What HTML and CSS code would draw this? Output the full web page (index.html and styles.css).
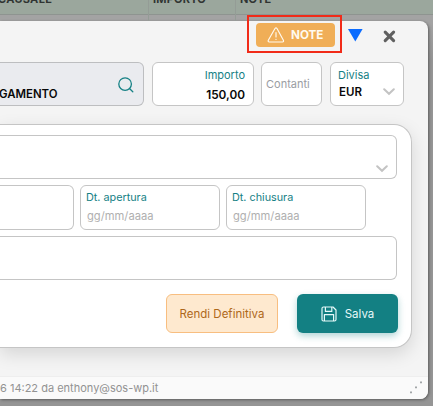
FILE: index.html
```
<!DOCTYPE html>
<html lang="it">
<head>
<meta charset="utf-8">
<title>Note</title>
<link rel="stylesheet" href="styles.css">
</head>
<body>
<div class="page">
  <div class="table-head">
    <span class="th th-causale"><span>CAUSALE</span></span>
    <span class="th th-importo"><span>IMPORTO</span></span>
    <span class="th th-note"><span>NOTE</span></span>
  </div>
  <main class="dialog">
    <header class="toolbar">
      <div class="highlight">
        <button class="note-btn">
          <svg width="18" height="16" viewBox="0 0 18 16" fill="none" stroke="currentColor" stroke-width="1.15" stroke-linejoin="round" stroke-linecap="round"><path d="M8 1.5 1.3 13.2Q.7 15 2.3 15H15.5Q17 15 16.4 13.2L10 1.5Q9 .3 8 1.5Z"/><path d="M9 5.5V10M9 12.3V12.5"/></svg>
          <span>NOTE</span>
        </button>
      </div>
      <svg class="triangle" width="15" height="13" viewBox="0 0 15 13"><path d="M0 0H14.6L7.3 12.4Z" fill="#0b6cff"/></svg>
      <svg class="close" width="13" height="13" viewBox="0 0 13 13"><path d="M2.2 2.2 10.6 10.6M10.6 2.2 2.2 10.6" stroke="#606060" stroke-width="3.1" stroke-linecap="round"/></svg>
    </header>
    <section class="fields">
      <div class="field causale"><b>GAMENTO</b>
        <svg width="16" height="16" viewBox="0 0 16 16" fill="none" stroke="#168185" stroke-width="1.3" stroke-linecap="round"><circle cx="7.1" cy="7.1" r="6.3"/><path d="m11.7 11.7 3.1 3.1"/></svg>
      </div>
      <div class="field importo"><label>Importo</label><b>150,00</b></div>
      <div class="field contanti">Contanti</div>
      <div class="field divisa"><label>Divisa</label><b>EUR</b>
        <svg class="chevron" width="12" height="8" viewBox="0 0 12 8"><path d="m1.2 1.2 4.8 4.6 4.8-4.6"/></svg>
      </div>
    </section>
    <section class="panel">
      <div class="field select"><svg class="chevron" width="12" height="8" viewBox="0 0 12 8"><path d="m1.2 1.2 4.8 4.6 4.8-4.6"/></svg></div>
      <div class="dates">
        <div class="field blank"></div>
        <div class="field date"><label>Dt. apertura</label><span>gg/mm/aaaa</span></div>
        <div class="field date"><label>Dt. chiusura</label><span>gg/mm/aaaa</span></div>
      </div>
      <div class="field wide"></div>
      <div class="actions">
        <button class="btn final">Rendi Definitiva</button>
        <button class="btn save">
          <svg width="16" height="16" viewBox="0 0 16 16" fill="none" stroke="currentColor" stroke-width="1.2" stroke-linejoin="round"><path d="M2.5 1H12L15 4V13.5Q15 15 13.5 15H2.5Q1 15 1 13.5V2.5Q1 1 2.5 1Z"/><path d="M4.4 1V5.4H10.8V1M3.4 15V8.6H12.6V15"/></svg>
          <span>Salva</span>
        </button>
      </div>
    </section>
    <footer class="status">
      <span>6 14:22 da enthony@sos-wp.it</span>
      <svg width="13" height="13" viewBox="0 0 13 13" fill="#a2a6a8"><path d="M0 10.5h2v1.7H0zM5 5.5h2v1.7H5zM10 .5h2v1.7h-2z"/></svg>
    </footer>
  </main>
</div>
</body>
</html>
```
FILE: styles.css
```
* { box-sizing: border-box; }

body { margin: 0; }

.page {
  width: 433px;
  height: 406px;
  overflow: hidden;
  background: linear-gradient(#a3a3a3 0 23px, #959595 60px);
  font: 12px/14px Inter, "Liberation Sans", sans-serif;
  color: #080808;
}

button { font: inherit; border: 0; padding: 0; }

.table-head {
  display: flex;
  height: 21px;
  background: linear-gradient(#9ba79d 0 14px, #8e9490 14px 15px, #a3a3a3 15px);
}

.th {
  height: 21px;
  color: #303432;
  font-size: 11px;
  font-weight: 700;
  border-right: 1px solid #949c96;
}

.th span { display: block; margin-top: -8px; letter-spacing: .2px; white-space: nowrap; }
.th-causale { width: 149px; }
.th-causale span { margin-left: -2px; letter-spacing: .3px; }
.th-importo { width: 87px; padding-left: 4px; }
.th-note { width: 197px; padding-left: 4px; border: 0; }

.dialog {
  display: flex;
  flex-direction: column;
  width: 428px;
  height: 378px;
  background: #f4f4f4;
  border-radius: 0 8px 8px 0;
  box-shadow: 1px 1px 3px #5d5d5d;
}

.toolbar {
  display: flex;
  height: 41px;
  margin-top: -6px;
  padding-right: 32px;
  justify-content: flex-end;
  align-items: flex-start;
  flex: none;
}

.highlight {
  width: 95px;
  height: 38px;
  border: 2px solid #f12b19;
  padding: 6px 0 0 7px;
}

.note-btn {
  display: flex;
  width: 79px;
  height: 24px;
  align-items: center;
  padding-left: 11px;
  gap: 6px;
  border-radius: 4px;
  background: #f0ae57;
  color: #fffaf0;
  font-weight: 700;
  font-size: 11.7px;
}

.triangle { margin: 14px 0 0 6px; }
.close { margin: 15px 0 0 20px; }

.fields { display: flex; gap: 8px; margin-top: 6px; height: 44px; flex: none; }

.field {
  position: relative;
  height: 44px;
  border: 1px solid #c5c5c5;
  border-radius: 6px;
  background: #fff;
  flex: none;
}

.field label { display: block; color: #168185; font-size: 11px; }

.field b { display: block; font-size: 11.8px; font-weight: 600; }

.causale {
  display: flex;
  justify-content: space-between;
  width: 144px;
  margin: 0;
  padding: 14px 9px 0 0;
  border-left: 0;
  border-radius: 0 6px 6px 0;
  background: #eaebef;
  border-color: #bdbec0;
}

.causale b { margin: 10px 0 0 -1px; font-size: 11.4px; }

.importo { width: 102px; padding: 5px 8px 0 0; text-align: right; }
.importo b { margin-top: 6px; }
.contanti { width: 61px; margin-left: -1px; padding: 14px 0 0 4px; color: #9a9da3; font-size: 11px; }
.divisa { width: 74px; padding: 5px 0 0 7px; }
.divisa b { margin: 3px 0 0 1px; font-size: 11.5px; }

.chevron { fill: none; stroke: #c3c3c3; stroke-width: 2; stroke-linecap: round; position: absolute; }
.divisa .chevron { right: 8px; top: 25px; }
.select .chevron { right: 8px; top: 29px; }

.panel {
  width: 412px;
  height: 224px;
  margin-top: 18px;
  padding: 10px 14px 0 0;
  background: #fff;
  border: 1px solid #c5c5c5;
  border-left: 0;
  border-radius: 0 18px 18px 0;
  box-shadow: 0 6px 18px #00000020;
  flex: none;
}

.select, .wide { width: 397px; border-left: 0; border-radius: 0 6px 6px 0; }

.dates { display: flex; gap: 6px; margin: 6px 0; height: 45px; }
.dates .field { height: 45px; border-width: 1.5px; }
.dates .blank { width: 74px; border-left: 0; border-radius: 0 6px 6px 0; }
.date { width: 140px; padding: 5px 0 0 5px; }
.date label { font-size: 10.8px; }
.date span { display: block; margin: 4px 0 0 1px; color: #b0b0b0; font-size: 11.2px; }

.actions { display: flex; justify-content: flex-end; gap: 19px; margin: 14px -1px 0 0; }

.btn { height: 39px; border-radius: 6px; font-size: 11.5px; }

.final { width: 112px; border: 1px solid #f8be80; background: #fee9cf; color: #ae681b; }

.save {
  display: flex;
  width: 101px;
  align-items: center;
  justify-content: center;
  gap: 8px;
  background: #138083;
  color: #e7f9f9;
  box-shadow: 0 3px 7px #13808355;
}

.status {
  display: flex;
  height: 23px;
  justify-content: space-between;
  margin-top: auto;
  padding: 4px 5px 0 0;
  border-top: 1px solid #eee;
  border-radius: 0 0 8px 0;
  background: #fafafa;
  color: #929292;
  font-size: 11px;
  position: relative;
}
```
